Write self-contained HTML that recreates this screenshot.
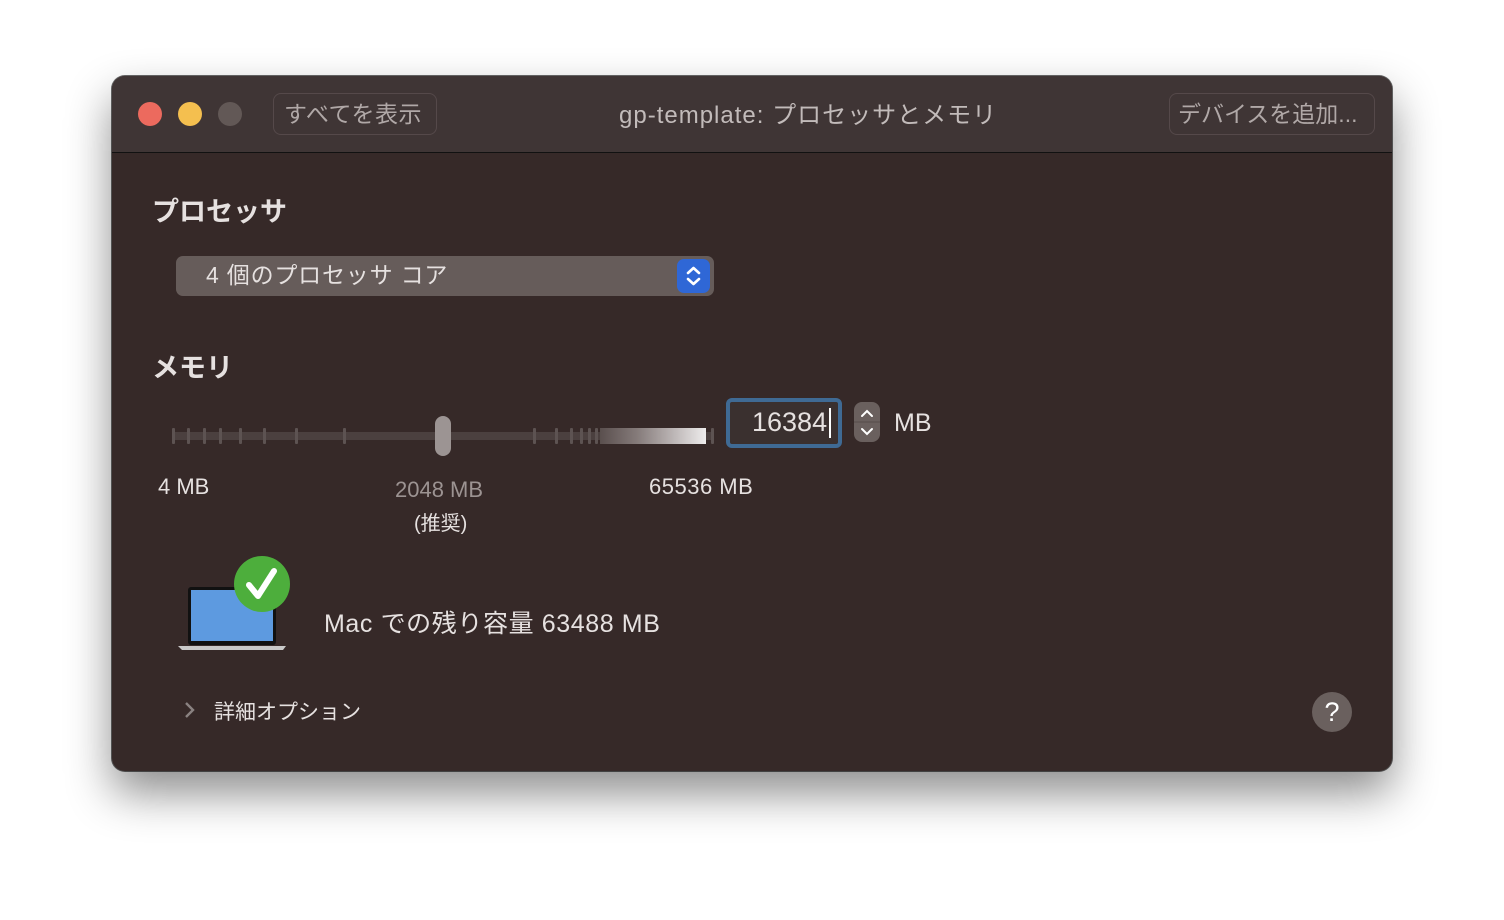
<!DOCTYPE html>
<html><head><meta charset="utf-8"><style>
*{margin:0;padding:0;box-sizing:border-box}
body{width:1504px;height:920px;background:#fff;position:relative;overflow:hidden;font-family:"Liberation Sans","Noto Sans CJK JP",sans-serif}
.win{position:absolute;left:112px;top:76px;width:1280px;height:695px;border-radius:13px;background:#362928;box-shadow:0 22px 45px rgba(0,0,0,.45),0 0 0 1px #6a6a6a;overflow:hidden}
.tb{position:absolute;left:0;top:0;width:1280px;height:77px;background:#3f3535;border-bottom:1px solid #111}
.dot{position:absolute;top:26px;width:24px;height:24px;border-radius:50%}
.btn{position:absolute;top:17px;height:42px;border:1px solid #55494a;border-radius:8px;color:#b0a8a7;font-size:23px;line-height:40px;padding:0 10px;letter-spacing:.5px;white-space:nowrap;overflow:hidden}
.a{position:absolute;color:#e6e1e0;white-space:nowrap}
.tick{position:absolute;top:428px;width:3px;height:16px;background:#5d5352;border-radius:1px}
</style></head><body>
<div class="win">
 <div class="tb">
  <div class="dot" style="left:26px;background:#ec6a5e"></div>
  <div class="dot" style="left:66px;background:#f4bf4f"></div>
  <div class="dot" style="left:106px;background:#625856"></div>
  <div class="btn" style="left:161px;width:164px">すべてを表示</div>
  <div class="a" style="left:507px;top:19px;font-size:24px;color:#c2bbba;letter-spacing:1px">gp-template: プロセッサとメモリ</div>
  <div class="btn" style="left:1057px;width:206px;padding:0 8px;letter-spacing:0">デバイスを追加...</div>
 </div>
</div>
<div class="a" style="left:152px;top:190px;font-size:27px;font-weight:bold">プロセッサ</div>
<div style="position:absolute;left:176px;top:256px;width:538px;height:40px;background:#665c5a;border-radius:7px"></div>
<div class="a" style="left:206px;top:259px;font-size:23px;line-height:32px;letter-spacing:.8px">4 個のプロセッサ コア</div>
<div style="position:absolute;left:677px;top:259px;width:33px;height:34px;background:#2f67d6;border-radius:7px"></div>
<svg style="position:absolute;left:677px;top:259px" width="33" height="34"><path d="M11 14l5.5-5 5.5 5M11 20l5.5 5 5.5-5" stroke="#fff" stroke-width="2.6" fill="none" stroke-linecap="round" stroke-linejoin="round"/></svg>
<div class="a" style="left:152px;top:346px;font-size:27px;font-weight:bold">メモリ</div>
<div style="position:absolute;left:172px;top:432px;width:540px;height:8px;background:#4b403f"></div>
<div class="tick" style="left:172px"></div><div class="tick" style="left:187px"></div><div class="tick" style="left:203px"></div><div class="tick" style="left:219px"></div><div class="tick" style="left:239px"></div><div class="tick" style="left:263px"></div><div class="tick" style="left:295px"></div><div class="tick" style="left:343px"></div>
<div class="tick" style="left:533px"></div><div class="tick" style="left:555px"></div><div class="tick" style="left:570px"></div><div class="tick" style="left:580px"></div><div class="tick" style="left:588px"></div><div class="tick" style="left:595px"></div><div class="tick" style="left:711px"></div>
<div style="position:absolute;left:600px;top:428px;width:106px;height:16px;background:linear-gradient(90deg,#5a4f4e,#857b7a 35%,#b5aeae 65%,#eeecec)"></div>
<div style="position:absolute;left:435px;top:416px;width:16px;height:40px;background:#9c9493;border-radius:8px"></div>
<div class="a" style="left:158px;top:474px;font-size:22px">4 MB</div>
<div class="a" style="left:395px;top:477px;font-size:22px;color:#9c9392">2048 MB</div>
<div class="a" style="left:414px;top:507px;font-size:20px">(推奨)</div>
<div class="a" style="left:649px;top:474px;font-size:22px;letter-spacing:.5px">65536 MB</div>
<div style="position:absolute;left:726px;top:398px;width:116px;height:50px;border:4px solid #3f6a94;border-radius:6px;background:#3a302f"></div>
<div class="a" style="left:752px;top:407px;font-size:27px">16384</div>
<div style="position:absolute;left:829px;top:408px;width:2px;height:30px;background:#fff"></div>
<div style="position:absolute;left:854px;top:402px;width:26px;height:40px;background:#6a605e;border-radius:8px"></div>
<svg style="position:absolute;left:854px;top:402px" width="26" height="40"><path d="M8 14l5-5 5 5M8 27l5 5 5-5" stroke="#fff" stroke-width="2" fill="none" stroke-linecap="round"/><path d="M0 20h26" stroke="#554b4a"/></svg>
<div class="a" style="left:894px;top:409px;font-size:25px">MB</div>
<svg style="position:absolute;left:176px;top:555px" width="118" height="100">
 <rect x="12" y="32" width="88" height="58" rx="3" fill="#111"/>
 <rect x="15" y="35" width="82" height="51" fill="#5d9ae0"/>
 <path d="M2 91h108l-3 4H6z" fill="#c9c9c9"/>
 <circle cx="86" cy="29" r="28" fill="#4dae3c"/>
 <path d="M73 30l9 11 16-25" stroke="#fff" stroke-width="6" fill="none" stroke-linecap="round" stroke-linejoin="round"/>
</svg>
<div class="a" style="left:324px;top:604px;font-size:25px;letter-spacing:.6px">Mac での残り容量 63488 MB</div>
<svg style="position:absolute;left:182px;top:700px" width="14" height="20"><path d="M4 3l7 7-7 7" stroke="#8a8281" stroke-width="2.4" fill="none"/></svg>
<div class="a" style="left:214px;top:696px;font-size:21px">詳細オプション</div>
<div style="position:absolute;left:1312px;top:692px;width:40px;height:40px;border-radius:50%;background:#6a605e;color:#fff;font-size:27px;text-align:center;line-height:40px">?</div>
</body></html>
